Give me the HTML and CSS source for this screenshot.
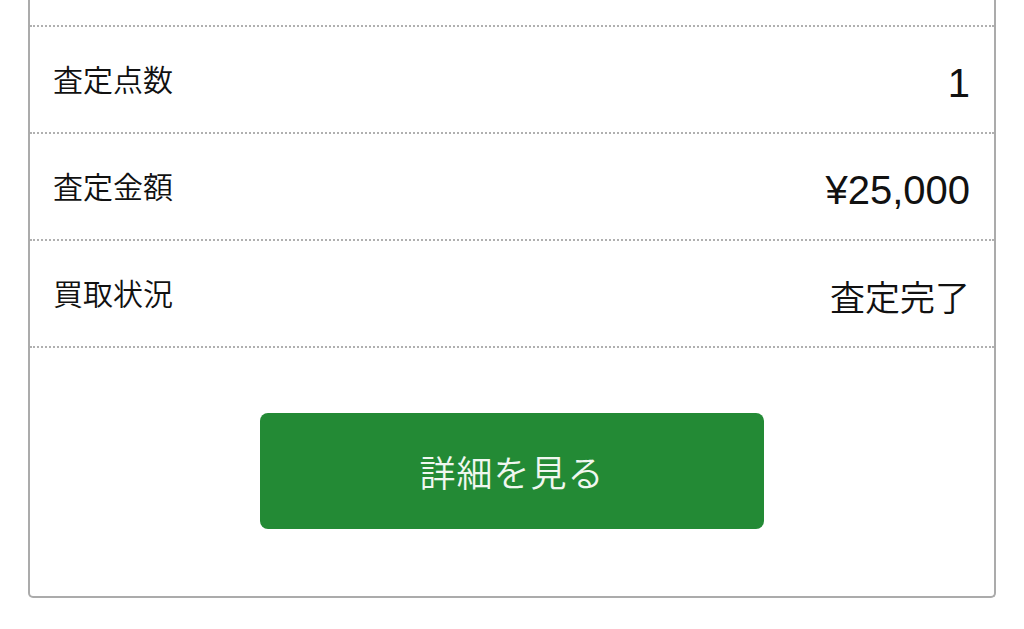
FILE: index.html
```html
<!DOCTYPE html>
<html lang="ja">
<head>
<meta charset="utf-8">
<link rel="stylesheet" href="styles.css">
</head>
<body>
<div class="page">
  <div class="card">
    <div class="row-cut"></div>
    <div class="row">
      <span class="label">査定点数</span>
      <span class="value num">1</span>
    </div>
    <div class="row">
      <span class="label">査定金額</span>
      <span class="value num">¥25,000</span>
    </div>
    <div class="row">
      <span class="label">買取状況</span>
      <span class="value">査定完了</span>
    </div>
    <div class="actions">
      <a class="btn" href="#">詳細を見る</a>
    </div>
  </div>
</div>
</body>
</html>
```
FILE: styles.css
```css
html, body {
  margin: 0;
  padding: 0;
  background: #ffffff;
}
body {
  font-family: "Noto Sans CJK JP", "Noto Sans", sans-serif;
  font-weight: 350;
  color: #111111;
  overflow: hidden;
}
.page {
  padding: 0 28px;
}
.card {
  border: 2px solid #ababab;
  border-top: 0;
  border-radius: 0 0 5px 5px;
  background: #fff;
}
.row-cut {
  height: 25px;
}
.row {
  height: 105px;
  border-top: 2px dotted #b0b0b0;
  display: flex;
  align-items: center;
  justify-content: space-between;
  padding: 0 24px 0 23px;
}
.label {
  font-size: 30px;
  line-height: 1;
  padding-bottom: 4px;
}
.value {
  font-size: 35px;
  line-height: 1;
  padding-top: 3px;
}
.value.num {
  font-family: "Liberation Sans", "Noto Sans CJK JP", sans-serif;
  font-weight: 400;
  font-size: 40px;
  padding-top: 6px;
}
.actions {
  border-top: 2px dotted #b0b0b0;
  padding: 65px 0 67px;
  display: flex;
  justify-content: center;
}
.btn {
  width: 504px;
  height: 116px;
  background: #238a35;
  border-radius: 8px;
  color: #f0f7f0;
  font-size: 36px;
  text-decoration: none;
  display: flex;
  align-items: center;
  justify-content: center;
  letter-spacing: 1px;
}
```
